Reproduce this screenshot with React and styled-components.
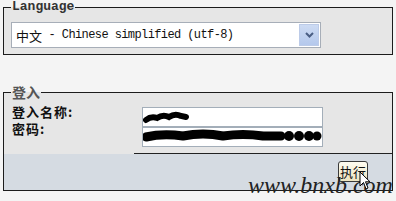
import styled, { createGlobalStyle } from "styled-components";

const GlobalStyle = createGlobalStyle`
  html, body {
    margin: 0;
    padding: 0;
    background: #f4f4f4;
  }
`;

const Page = styled.div`
  position: relative;
  height: 201px;
  overflow: hidden;
  padding: 0 3px;
`;

const Group = styled.fieldset`
  margin: ${(p) => p.$top || 0}px 0 0;
  padding: ${(p) => p.$pad};
  border: 1px solid #1c1c1c;
  background: #e6e6e6;
  min-width: 0;
`;

const Legend = styled.legend`
  margin-left: ${(p) => p.$offset || 0}px;
  padding: 0 1px;
  height: 14px;
  line-height: 14px;
  font-family: ${(p) =>
    p.$mono ? '"Liberation Mono", monospace' : '"Noto Sans CJK SC", sans-serif'};
  font-size: ${(p) => (p.$mono ? 13 : 14)}px;
  font-weight: bold;
  color: ${(p) => (p.$mono ? "#333" : "#555")};
`;

const SelectBox = styled.div`
  box-sizing: border-box;
  width: 310px;
  height: 26px;
  display: flex;
  align-items: center;
  padding-left: 4px;
  background: #fff;
  border: 1px solid #a7aeb8;
  font-family: "Liberation Mono", monospace;
  font-size: 12px;
  letter-spacing: -0.6px;
  color: #111;
  white-space: pre;
`;

const Cjk = styled.span`
  font-family: "Noto Sans CJK SC", sans-serif;
  font-size: 13px;
  letter-spacing: 0;
`;

const DropButton = styled.div`
  box-sizing: border-box;
  margin-left: auto;
  margin-right: 1px;
  width: 20px;
  height: 22px;
  display: flex;
  align-items: center;
  justify-content: center;
  background: linear-gradient(#cddbf3, #b4c8ec);
  border: 1px solid #bccbe8;
`;

const Upper = styled.div`
  display: grid;
  grid-template-columns: 130px 1fr;
`;

const Labels = styled.div`
  padding: 4px 0 0 8px;
  font-family: "Noto Sans CJK SC", sans-serif;
  font-size: 13px;
  letter-spacing: 1px;
  line-height: 17px;
  font-weight: bold;
  color: #111;
`;

const Inputs = styled.div`
  padding: 8px 0 6px 8px;
  border-bottom: 1px solid #222;
`;

const Field = styled.div`
  box-sizing: border-box;
  width: 181px;
  height: 20px;
  background: #fff;
  border: 1px solid #a3aeb9;
  overflow: hidden;
  svg {
    display: block;
  }
`;

const Lower = styled.div`
  display: flex;
  justify-content: flex-end;
  padding: 7px 24px 8px 0;
  background: #d5dbe2;
`;

const Button = styled.button`
  box-sizing: border-box;
  width: 30px;
  height: 21px;
  padding: 0;
  border: 1px solid #3a3a3a;
  border-radius: 3px;
  background: linear-gradient(#fffdf2, #eee5c0);
  font-family: "Noto Sans CJK SC", sans-serif;
  font-size: 13px;
  line-height: 19px;
  color: #111;
`;

const Watermark = styled.div`
  position: absolute;
  left: 248px;
  top: 173px;
  font-family: "Liberation Serif", serif;
  font-style: italic;
  font-size: 24px;
  line-height: 24px;
  color: #222;
  white-space: nowrap;
`;

const Cursor = styled.svg`
  position: absolute;
  left: 359px;
  top: 171px;
`;

export default function App() {
  return (
    <>
      <GlobalStyle />
      <Page>
        <Group $pad="8px 7px 6px">
          <Legend $mono>Language</Legend>
          <SelectBox>
            <Cjk>中文</Cjk>
            {" - Chinese simplified (utf-8)"}
            <DropButton>
              <svg width="9" height="6" viewBox="0 0 9 6">
                <path d="M1 1 L4.5 4.5 L8 1" fill="none" stroke="#4a5e84" strokeWidth="2" />
              </svg>
            </DropButton>
          </SelectBox>
        </Group>

        <Group $top={30} $pad="0">
          <Legend $offset={7}>登入</Legend>
          <Upper>
            <Labels>
              <div>登入名称:</div>
              <div>密码:</div>
            </Labels>
            <Inputs>
              <Field>
                <svg width="181" height="20">
                  <path
                    d="M3 12 Q8 8 14 10 Q20 6 26 9 Q32 5 38 8 L43 9"
                    fill="none"
                    stroke="#000"
                    strokeWidth="6"
                    strokeLinecap="round"
                  />
                </svg>
              </Field>
              <Field>
                <svg width="181" height="20">
                  <path
                    d="M3 9 Q20 5 40 8 Q60 4 80 8 Q100 5 120 8 L138 8"
                    fill="none"
                    stroke="#000"
                    strokeWidth="9"
                    strokeLinecap="round"
                  />
                  <circle cx="146" cy="8" r="5" />
                  <circle cx="156" cy="8" r="5" />
                  <circle cx="166" cy="8" r="5" />
                  <circle cx="174" cy="8" r="4.5" />
                </svg>
              </Field>
            </Inputs>
          </Upper>
          <Lower>
            <Button>执行</Button>
          </Lower>
        </Group>

        <Watermark>www.bnxb.com</Watermark>
        <Cursor width="12" height="20" viewBox="0 0 12 20">
          <path
            d="M1 1 L1 15 L4.5 11.5 L7 18 L9 17 L6.5 10.8 L11 10.8 Z"
            fill="#fff"
            stroke="#000"
            strokeWidth="1"
          />
        </Cursor>
      </Page>
    </>
  );
}
